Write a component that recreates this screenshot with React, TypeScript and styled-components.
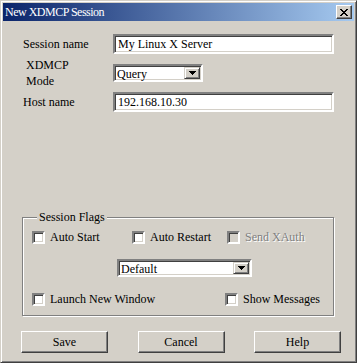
import React from 'react';
import styled, { createGlobalStyle } from 'styled-components';

const Global = createGlobalStyle`
  html, body { margin: 0; padding: 0; background: #d4d0c8; }
  body {
    font-family: "Liberation Serif", "Times New Roman", serif;
    font-size: 12px;
    color: #000;
  }
  * { box-sizing: border-box; }
`;

const Window = styled.div`
  width: 357px;
  height: 363px;
  display: flex;
  flex-direction: column;
  background: #d4d0c8;
  padding: 2px;
  border: 1px solid;
  border-color: #d4d0c8 #404040 #404040 #d4d0c8;
  box-shadow: inset 1px 1px #fff, inset -1px -1px #808080;
`;

const TitleBar = styled.div`
  height: 18px;
  flex: none;
  display: flex;
  align-items: center;
  justify-content: space-between;
  padding: 0 2px 0 2px;
  background: linear-gradient(to right, #0a246a, #a6caf0);
`;

const Title = styled.span`
  color: #fff;
  font-size: 12px;
  line-height: 18px;
  letter-spacing: -0.5px;
  white-space: nowrap;
`;

const CloseButton = styled.button`
  width: 16px;
  height: 14px;
  padding: 0;
  display: flex;
  align-items: center;
  justify-content: center;
  background: #d4d0c8;
  border: 1px solid;
  border-color: #fff #404040 #404040 #fff;
  box-shadow: inset -1px -1px #808080;
`;

const Content = styled.div`
  flex: 1;
  display: flex;
  flex-direction: column;
  padding: 13px 13px 7px 19px;
`;

const FormGrid = styled.div`
  display: grid;
  grid-template-columns: 91px 221px;
  grid-template-rows: 20px 18px 20px;
  row-gap: 10px;
  align-items: center;
`;

const Label = styled.label<{ $indent?: number }>`
  padding-left: ${(p) => p.$indent ?? 1}px;
  line-height: 16px;
  white-space: nowrap;
`;

const sunken = `
  border: 2px solid;
  border-color: #808080 #fff #fff #808080;
  box-shadow: inset 1px 1px #404040, inset -1px -1px #d4d0c8;
`;

const TextInput = styled.input`
  ${sunken}
  height: 20px;
  width: 100%;
  padding: 0 3px;
  margin: 0;
  background: #fff;
  font: inherit;
  font-size: 12px;
  color: #000;
  outline: none;
`;

const Select = styled.div<{ $width: number }>`
  ${sunken}
  width: ${(p) => p.$width}px;
  height: 18px;
  display: flex;
  align-items: stretch;
  background: #fff;
  padding: 1px;
`;

const SelectValue = styled.span`
  flex: 1;
  padding-left: 1px;
  line-height: 14px;
`;

const DropButton = styled.span`
  width: 16px;
  flex: none;
  display: flex;
  align-items: center;
  justify-content: center;
  background: #d4d0c8;
  border: 1px solid;
  border-color: #d4d0c8 #404040 #404040 #d4d0c8;
  box-shadow: inset 1px 1px #fff, inset -1px -1px #808080;
`;

const Group = styled.fieldset`
  width: 312px;
  margin: auto 0 0 0;
  padding: 7px 0 9px 9px;
  border: 1px solid #808080;
  box-shadow: inset 1px 1px #fff, 1px 1px #fff;
  display: flex;
  flex-direction: column;
`;

const Legend = styled.legend`
  margin-left: 5px;
  padding: 0 2px;
  line-height: 14px;
  background: #d4d0c8;
`;

const FlagRow = styled.div<{ $cols: string }>`
  display: grid;
  grid-template-columns: ${(p) => p.$cols};
  height: 13px;
  align-items: center;
`;

const CheckItem = styled.label<{ $disabled?: boolean }>`
  display: flex;
  align-items: center;
  gap: 5px;
  white-space: nowrap;
  line-height: 13px;
  color: ${(p) => (p.$disabled ? '#808080' : '#000')};
  text-shadow: ${(p) => (p.$disabled ? '1px 1px #fff' : 'none')};
`;

const Box = styled.span<{ $disabled?: boolean }>`
  ${sunken}
  width: 13px;
  height: 13px;
  flex: none;
  background: ${(p) => (p.$disabled ? '#d4d0c8' : '#fff')};
`;

const SelectRow = styled.div`
  margin: 15px 0 16px 85px;
`;

const ButtonRow = styled.div`
  display: flex;
  justify-content: space-between;
  margin: 15px 0 0 -1px;
`;

const PushButton = styled.button`
  width: 87px;
  height: 22px;
  padding: 0;
  margin: 0;
  font: inherit;
  font-size: 12px;
  color: #000;
  background: #d4d0c8;
  border: 1px solid;
  border-color: #fff #404040 #404040 #fff;
  box-shadow: inset -1px -1px #808080;
`;

const CloseGlyph = () => (
  <svg width="8" height="7" viewBox="0 0 8 7" shapeRendering="crispEdges">
    <path
      d="M0 0h2v1H0zM6 0h2v1H6zM1 1h2v1H1zM5 1h2v1H5zM2 2h4v1H2zM3 3h2v1H3zM2 4h4v1H2zM1 5h2v1H1zM5 5h2v1H5zM0 6h2v1H0zM6 6h2v1H6z"
      fill="#000"
    />
  </svg>
);

const Arrow = () => (
  <svg width="7" height="4" viewBox="0 0 7 4" shapeRendering="crispEdges">
    <path d="M0 0h7v1H0zM1 1h5v1H1zM2 2h3v1H2zM3 3h1v1H3z" fill="#000" />
  </svg>
);

const Combo = ({ value, width }: { value: string; width: number }) => (
  <Select $width={width}>
    <SelectValue>{value}</SelectValue>
    <DropButton>
      <Arrow />
    </DropButton>
  </Select>
);

const Check = ({ label, disabled }: { label: string; disabled?: boolean }) => (
  <CheckItem $disabled={disabled}>
    <Box $disabled={disabled} />
    {label}
  </CheckItem>
);

export default function App() {
  return (
    <>
      <Global />
      <Window>
        <TitleBar>
          <Title>New XDMCP Session</Title>
          <CloseButton aria-label="Close">
            <CloseGlyph />
          </CloseButton>
        </TitleBar>
        <Content>
          <FormGrid>
            <Label>Session name</Label>
            <TextInput defaultValue="My Linux X Server" />
            <Label $indent={4}>
              XDMCP
              <br />
              Mode
            </Label>
            <Combo value="Query" width={90} />
            <Label>Host name</Label>
            <TextInput defaultValue="192.168.10.30" />
          </FormGrid>
          <Group>
            <Legend>Session Flags</Legend>
            <FlagRow $cols="100px 95px auto">
              <Check label="Auto Start" />
              <Check label="Auto Restart" />
              <Check label="Send XAuth" disabled />
            </FlagRow>
            <SelectRow>
              <Combo value="Default" width={135} />
            </SelectRow>
            <FlagRow $cols="193px auto">
              <Check label="Launch New Window" />
              <Check label="Show Messages" />
            </FlagRow>
          </Group>
          <ButtonRow>
            <PushButton>Save</PushButton>
            <PushButton>Cancel</PushButton>
            <PushButton>Help</PushButton>
          </ButtonRow>
        </Content>
      </Window>
    </>
  );
}
